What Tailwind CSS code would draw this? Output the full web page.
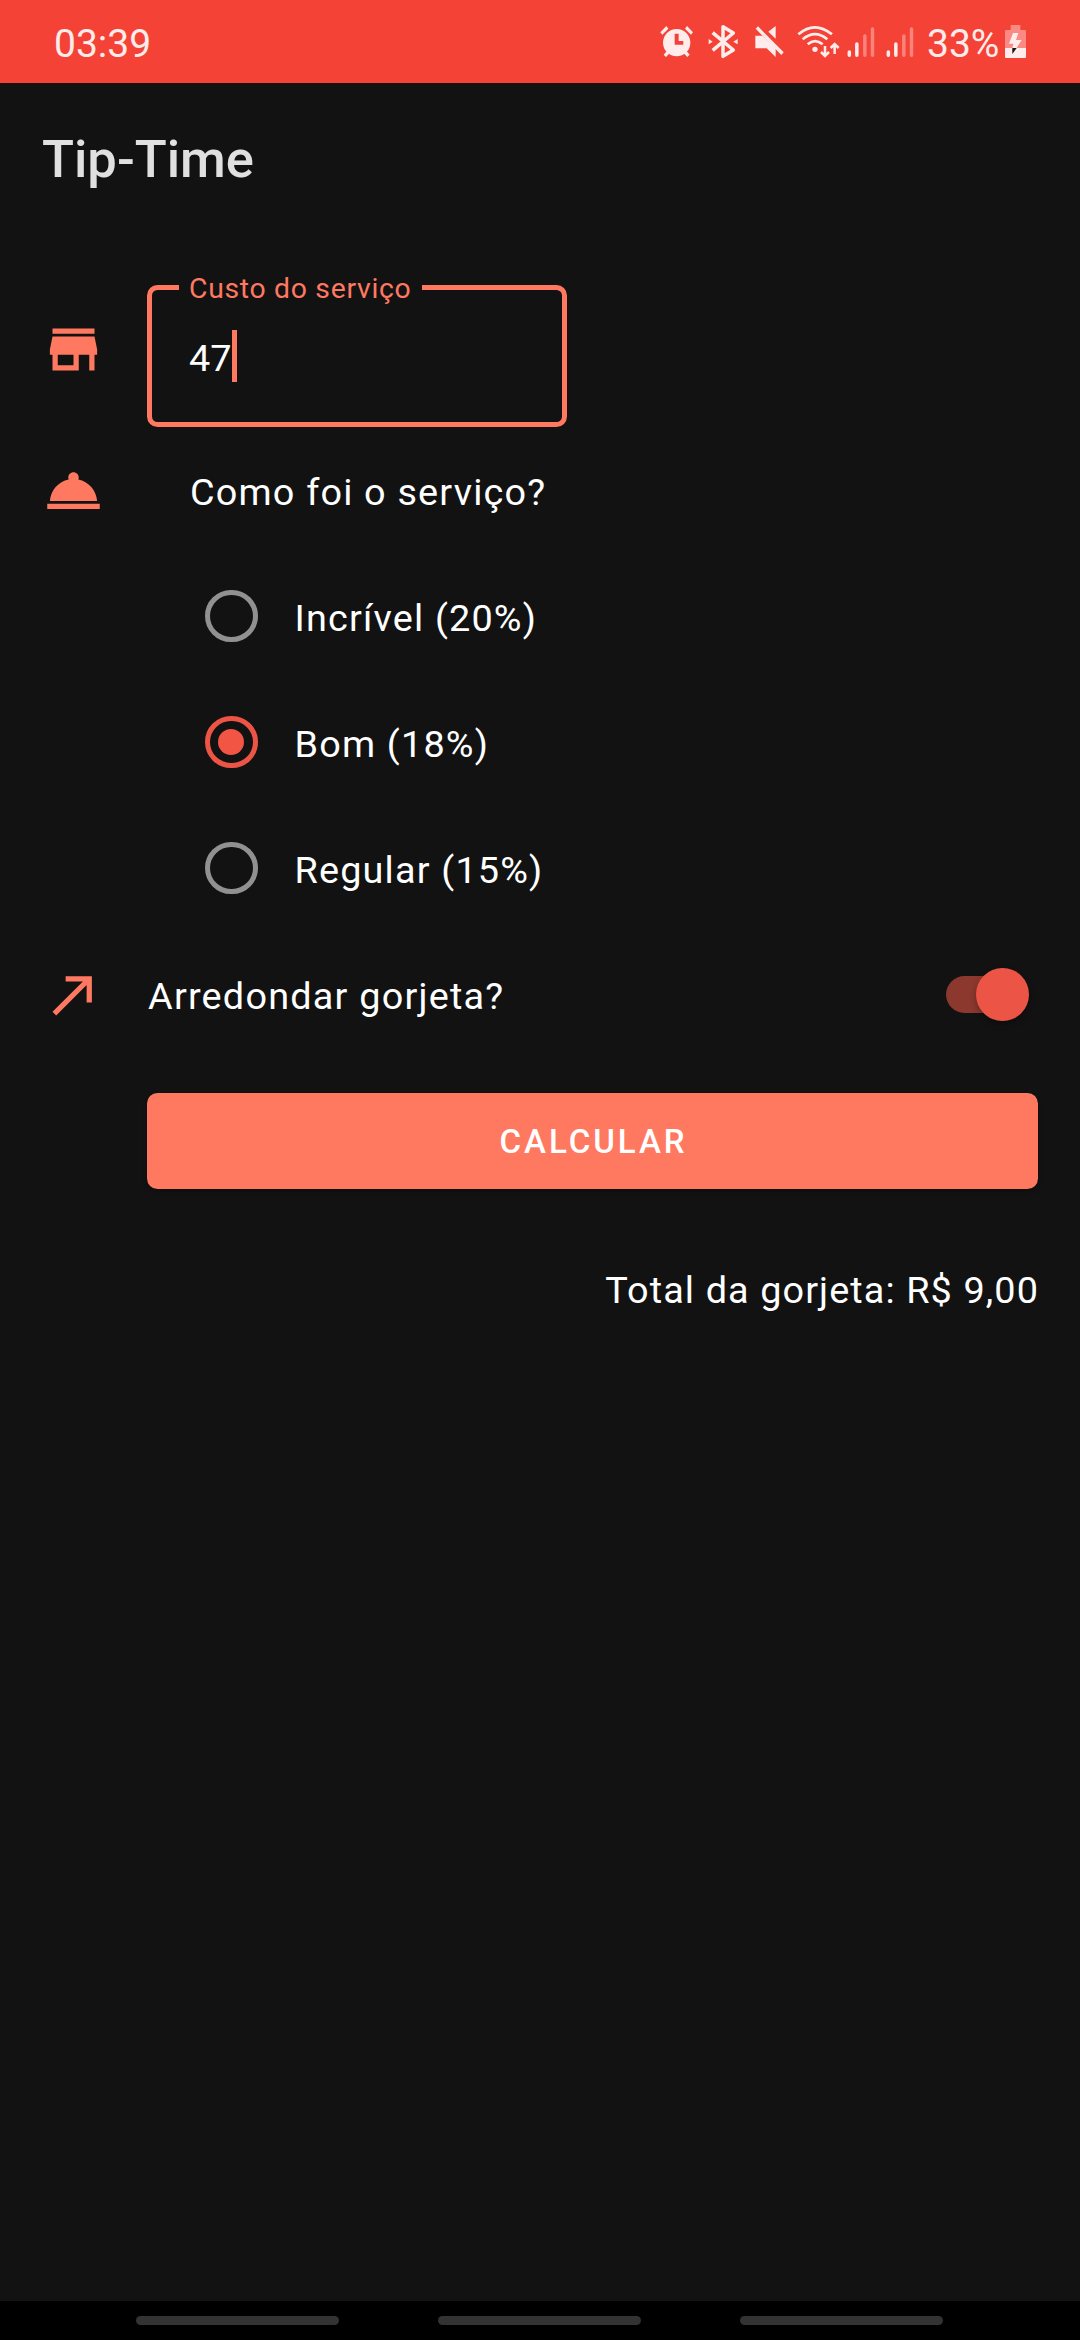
<!DOCTYPE html>
<html lang="pt-BR">
<head>
<meta charset="utf-8">
<title>Tip-Time</title>
<script src="https://cdn.jsdelivr.net/npm/@tailwindcss/browser@4"></script>
</head>
<body class="bg-[#121212] font-['Roboto',sans-serif] text-white">
<div class="flex h-[2340px] w-[1080px] flex-col overflow-hidden">
  <!-- Status bar -->
  <header class="flex h-[83px] shrink-0 items-start bg-[#f44336] pl-[54px] text-[39px] leading-[46px] text-[#ffeceb]">
    <span class="mt-[21px] w-[606px]">03:39</span>
    <svg class="mt-[25px] h-[33px] w-[34px] shrink-0" viewBox="61 75 102 99" fill="#ffeceb">
      <path fill-rule="evenodd" d="M111 87a41 41 0 1 0 0 82a41 41 0 1 0 0-82zM105 101h12v22h14v11h-26z"/>
      <path d="M62 97l18-19 6 8-18 18zM160 97l-18-19-6 8 18 18zM72 164l10-12 8 8-11 11zM150 164l-10-12-8 8 11 11z"/>
    </svg>
    <svg class="ml-[14px] mt-[24px] h-[35px] w-[31px] shrink-0" viewBox="205 72 93 105" fill="none" stroke="#ffeceb" stroke-width="10.500">
      <path stroke-linejoin="round" d="M219 98l62 52-31 19V80l31 19-62 52"/>
      <path stroke="none" fill="#ffeceb" d="M207 117l12 8-12 8zM294 117l-13 8 13 8z"/>
    </svg>
    <svg class="ml-[15px] mt-[24px] h-[35px] w-[31px] shrink-0" viewBox="344 72 93 105" fill="#ffeceb">
      <path d="M409 78v38l-22-21zM348 107h21l40 37v27l-27-26h-34z"/>
      <path d="M356 79l77 78-7 8-77-79z"/>
    </svg>
    <svg class="ml-[12px] mt-[24px] h-[35px] w-[43px] shrink-0" viewBox="469 72 129 105" fill="none" stroke="#ffeceb" stroke-width="8">
      <path d="M473 103q49-42 101 0M486 118q37-31 74 0M501 133q22-19 45 0"/>
      <circle cx="523" cy="148" r="8" fill="#ffeceb" stroke="none"/>
      <path stroke-width="7.500" d="M553 138v30M541 156l12 12 12-12M582 162v-30M570 144l12-12 12 12"/>
    </svg>
    <svg class="ml-[7px] mt-[26px] h-[32px] w-[28px] shrink-0" viewBox="20 78 84 96" stroke="#ffeceb" stroke-width="10.500" stroke-linecap="round">
      <path d="M27 156v10M49.500 132v34"/><path stroke-opacity=".38" d="M73.500 108v58M96.500 87v79"/>
    </svg>
    <svg class="ml-[11px] mt-[26px] h-[32px] w-[28px] shrink-0" viewBox="137 78 84 96" stroke="#ffeceb" stroke-width="10.500" stroke-linecap="round">
      <path d="M144 156v10M166.500 132v34"/><path stroke-opacity=".38" d="M190.500 108v58M213.500 87v79"/>
    </svg>
    <span class="ml-[13px] mt-[21px] w-[78px]">33%</span>
    <svg class="mt-[25px] h-[33px] w-[21px] shrink-0" viewBox="495 75 63 99">
      <path fill="#fa8a83" d="M512 75h29v15h14q3 0 3 3v52h-63V93q0-3 3-3h14z"/>
      <path fill="#ffeceb" d="M495 144h63v27q0 3-3 3h-57q-3 0-3-3z"/>
      <path fill="#ffeceb" d="M519 99h16l-7 21h17l-16 25h-12l3-14h-13z"/>
      <path fill="#121212" d="M517 144h13l-13 18z"/>
    </svg>
  </header>

  <h1 class="mt-[46px] h-[60px] shrink-0 pl-[42px] text-[52.5px] leading-[60px] font-medium text-[#e0e0e0]">Tip-Time</h1>

  <!-- Cost field -->
  <div class="mt-[96px] flex h-[142px] shrink-0">
    <svg class="ml-[42px] mt-[33px] size-[63px]" viewBox="0 0 24 24" fill="#ff7961"><path d="M20 4H4v2h16V4zm1 10v-2l-1-5H4l-1 5v2h1v6h10v-6h4v6h2v-6h1zm-9 4H6v-4h6v4z"/></svg>
    <div class="relative ml-[42px] flex w-[420px] items-start rounded-[10.5px] border-[5px] border-[#ff7961] pl-[37px]">
      <label class="absolute -top-[18px] left-[27px] h-[34px] w-[243px] bg-[#121212] pl-[10px] text-[28.35px] leading-[34px] tracking-[0.7px] whitespace-nowrap text-[#ff7961]">Custo do serviço</label>
      <span class="mt-[46px] text-[37.8px] leading-[44px]">47</span>
      <span class="mt-[40px] h-[52px] w-[5px] bg-[#ff7961]"></span>
    </div>
  </div>

  <!-- Service question -->
  <div class="mt-[32px] flex h-[63px] shrink-0">
    <svg class="ml-[42px] size-[63px]" viewBox="0 0 24 24" fill="#ff7961"><path d="M2 17h20v2H2zm11.840-9.210c.1-.24.16-.51.16-.79 0-1.100-.9-2-2-2s-2 .9-2 2c0 .28.06.55.16.79C6.250 8.600 3.270 11.930 3 16h18c-.27-4.070-3.250-7.400-7.160-8.210z"/></svg>
    <span class="ml-[85px] mt-[11px] text-[37.8px] leading-[44px] tracking-[1.18px]">Como foi o serviço?</span>
  </div>

  <div class="mt-[31px] flex shrink-0 flex-col pl-[205px] text-[37.8px] leading-[44px] tracking-[1.18px]">
    <div class="flex h-[126px] items-center"><span class="size-[52.5px] rounded-full border-[5.25px] border-[#919191]"></span><span class="ml-[37px] mt-[3px]">Incrível (20%)</span></div>
    <div class="flex h-[126px] items-center"><span class="flex size-[52.5px] items-center justify-center rounded-full border-[5px] border-[#ec5546]"><span class="size-[26px] rounded-full bg-[#f35545]"></span></span><span class="ml-[37px] mt-[3px]">Bom (18%)</span></div>
    <div class="flex h-[126px] items-center"><span class="size-[52.5px] rounded-full border-[5.25px] border-[#919191]"></span><span class="ml-[37px] mt-[3px]">Regular (15%)</span></div>
  </div>

  <!-- Round up -->
  <div class="mt-[32px] flex h-[63px] shrink-0">
    <svg class="ml-[42px] size-[63px]" viewBox="0 0 24 24" fill="#ff7961"><path d="M9 5v2h6.590L4 18.590 5.410 20 17 8.410V15h2V5z"/></svg>
    <span class="ml-[43px] mt-[11px] w-[798px] text-[37.8px] leading-[44px] tracking-[1.22px]">Arredondar gorjeta?</span>
    <div class="mt-[13px] flex h-[37px] w-[76px] items-center justify-end rounded-full bg-[#8c382f]">
      <span class="-mr-[7px] size-[53px] shrink-0 rounded-full bg-[#ec5545] shadow-[0_3px_6px_rgba(0,0,0,0.3)]"></span>
    </div>
  </div>

  <button class="ml-[147px] mt-[67px] h-[96px] w-[891px] shrink-0 rounded-[10.5px] bg-[#ff7961] pt-[2px] pl-[2px] text-[33.07px] leading-[40px] font-medium tracking-[2.95px] shadow-[0_3px_5px_rgba(0,0,0,0.2)]">CALCULAR</button>

  <p class="mr-[41px] mt-[79px] text-right text-[37.8px] leading-[44px] tracking-[1.1px]">Total da gorjeta: R$ 9,00</p>

  <!-- Gesture hints -->
  <nav class="mt-auto flex h-[39px] shrink-0 items-start gap-[99px] bg-black pl-[136px] pt-[15px]">
    <span class="h-[9px] w-[203px] rounded-full bg-[#333]"></span>
    <span class="h-[9px] w-[203px] rounded-full bg-[#333]"></span>
    <span class="h-[9px] w-[203px] rounded-full bg-[#333]"></span>
  </nav>
</div>
</body>
</html>
